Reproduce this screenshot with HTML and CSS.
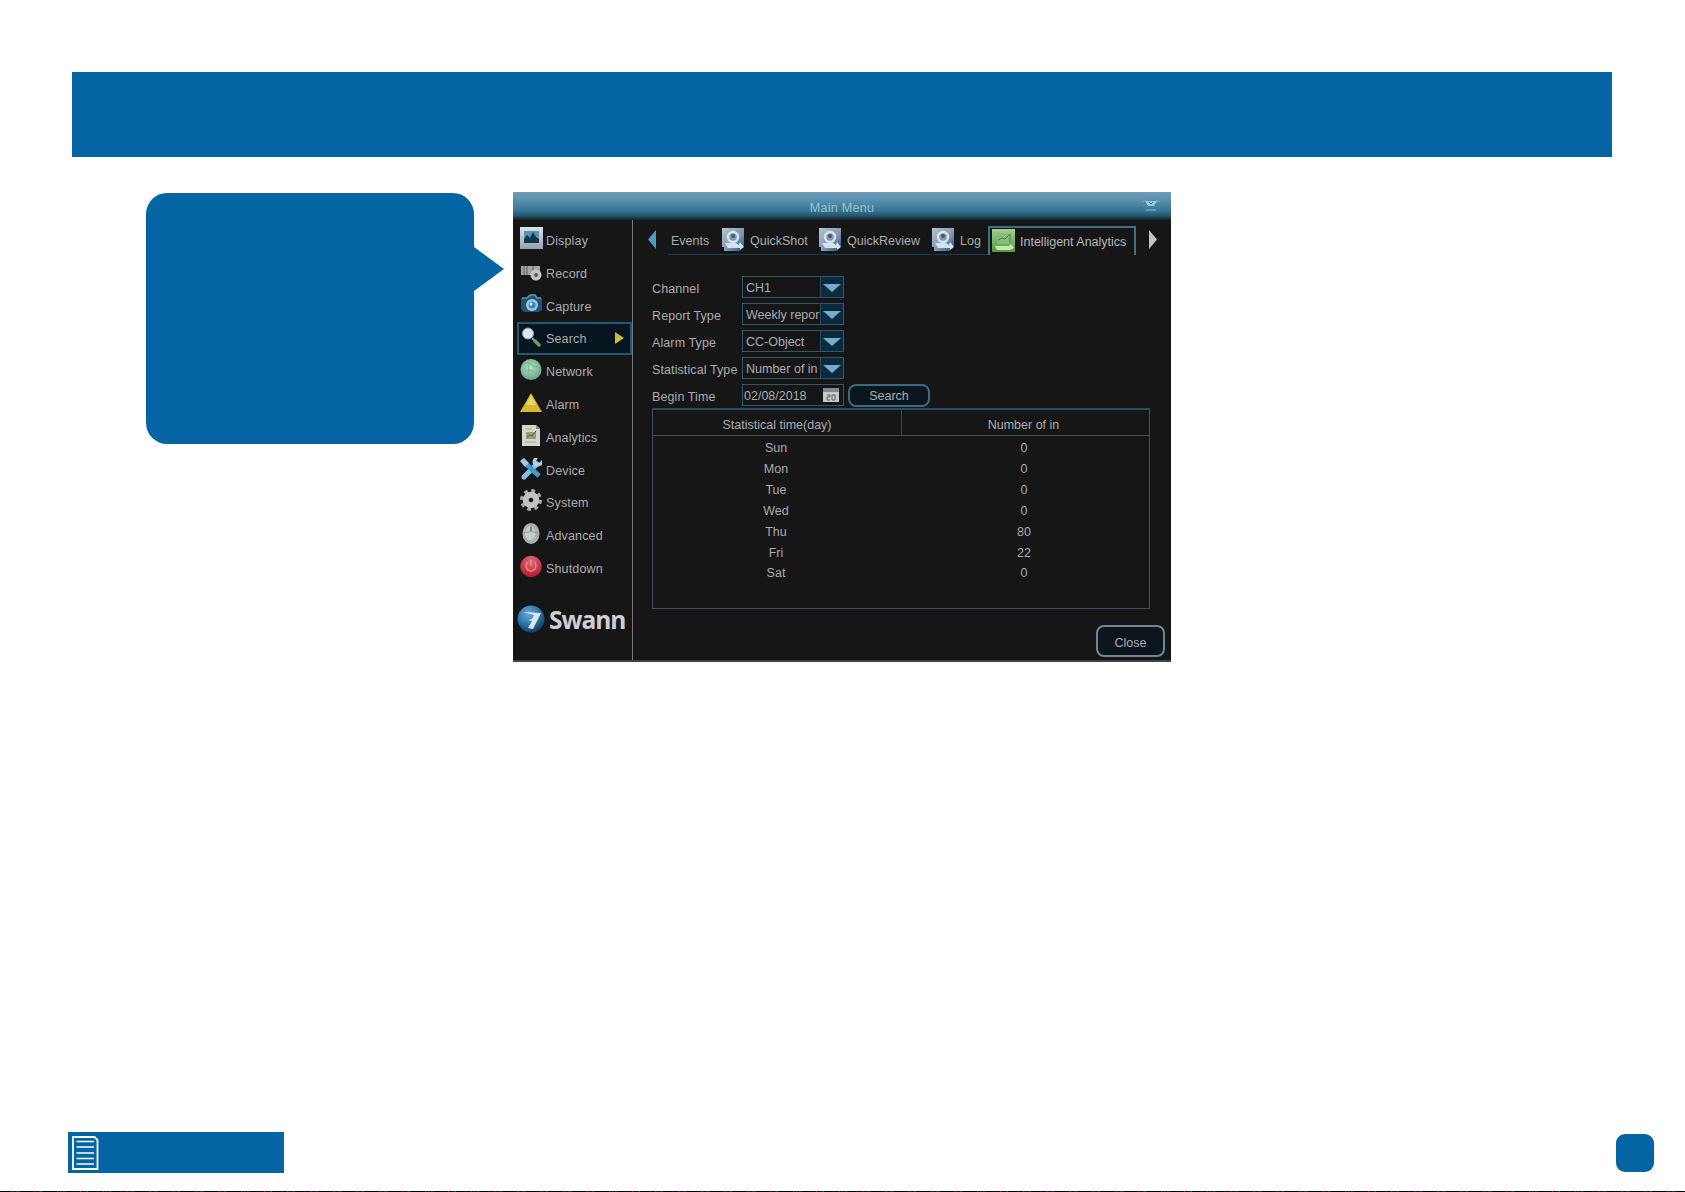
FILE: index.html
```html
<!DOCTYPE html>
<html lang="en">
<head>
  <meta charset="UTF-8">
  <title>Intelligent Analytics</title>
  <link rel="stylesheet" href="styles.css">
</head>
<body>

  <svg width="0" height="0" class="defs">
    <defs>
      <linearGradient id="silver" x1="0" y1="0" x2="0" y2="1"><stop offset="0" stop-color="#dde4e8"/><stop offset="1" stop-color="#93a1ab"/></linearGradient>
      <linearGradient id="tabBlue" x1="0" y1="0" x2="1" y2="1"><stop offset="0" stop-color="#b5c4d3"/><stop offset="0.6" stop-color="#7c95af"/><stop offset="1" stop-color="#1d4c86"/></linearGradient>
      <linearGradient id="tabGreen" x1="0" y1="0" x2="0" y2="1"><stop offset="0" stop-color="#a5cf91"/><stop offset="1" stop-color="#4f9e37"/></linearGradient>
      <radialGradient id="ball" cx="0.4" cy="0.3" r="0.7"><stop offset="0" stop-color="#69a9d1"/><stop offset="0.6" stop-color="#2a73a8"/><stop offset="1" stop-color="#123f66"/></radialGradient>
      <radialGradient id="green" cx="0.45" cy="0.4" r="0.6"><stop offset="0" stop-color="#b5e0c4"/><stop offset="1" stop-color="#66aa84"/></radialGradient>
      <radialGradient id="red" cx="0.5" cy="0.25" r="0.75"><stop offset="0" stop-color="#dc7078"/><stop offset="1" stop-color="#b61728"/></radialGradient>
      <symbol id="report" viewBox="0 0 23 24">
        <path d="M0 0h22v18h-4v5H2v-4H0z" fill="url(#tabBlue)"/>
        <circle cx="11" cy="9" r="5" fill="#8099b0" stroke="#dbe4eb" stroke-width="2.4"/>
        <circle cx="11" cy="8" r="2" fill="#3f5a75"/>
        <path d="M3 15h11l3 2 1-3 4 5-4 3v-2H6z" fill="#d3e2f0"/>
      </symbol>
    </defs>
  </svg>

  <div class="header"></div>

  <div class="content">
    <div class="callout"></div>

    <div class="window">
      <div class="titlebar">
        <span>Main Menu</span>
        <svg class="fold" width="20" height="12" viewBox="0 0 20 12"><path d="M1 3l4-2M19 3l-4-2M5 11h10" stroke="#6fa4bc" stroke-width="1.3"/><path d="M4 2h12l-3 5H7z" fill="#9cc8d9"/><path d="M8 3l2 2 2-2" stroke="#2b6d8d" fill="none"/></svg>
      </div>

      <div class="main">
        <!-- Left menu -->
        <div class="sidebar">
          <div class="item"><svg viewBox="0 0 23 23"><path fill="url(#silver)" d="M0 0h23v22H0z"/><path fill="#5a92b3" d="M4 4h15v12H4z"/><path d="M4 16V12l3-4 3 3 3-6 3 5 3 2v4z" fill="#11364f"/></svg><span>Display</span></div>
          <div class="item"><svg viewBox="0 0 23 23"><path fill="#a3a6a8" d="M1 6h19v9H1z"/><path d="M4 6v9M7 6v9M13 6v4" stroke="#595d60"/><circle cx="16" cy="15" r="5.5" fill="#c2c5c6"/><circle cx="16" cy="15" r="2" fill="#55595b"/></svg><span>Record</span></div>
          <div class="item"><svg viewBox="0 0 23 23"><path d="M1 5h6l3-3h5l2 3h5v12l-3 2H4l-3-3z" fill="#1c5376"/><path d="M2 5h5l3-3h5l2 3h4" stroke="#6296b3" stroke-width="1.5" fill="none"/><circle cx="12" cy="12" r="6" fill="#a1c8dc"/><circle cx="12" cy="12" r="3.6" fill="#3587ba"/><circle cx="11" cy="11" r="1.5" fill="#d8edf7"/></svg><span>Capture</span></div>
          <div class="item selected"><svg viewBox="0 0 23 23"><path d="M12 12l3 3" stroke="#7fa4b3" stroke-width="2"/><path d="M15 15l4 4" stroke="#71986f" stroke-width="3.5" stroke-linecap="round"/><circle cx="8" cy="7.5" r="5.5" fill="#d8e7ee" stroke="#87a9ba"/></svg><span>Search</span><i class="arrow"></i></div>
          <div class="item"><svg viewBox="0 0 23 23"><circle cx="11" cy="11.5" r="10.5" fill="url(#green)"/><path d="M4 6q4-3 8 1t7 1M5 14q5-4 9 0t4-1M11 2q-5 8 0 18" stroke="#79b592" fill="none"/></svg><span>Network</span></div>
          <div class="item"><svg viewBox="0 0 23 23"><path d="M11 2l11 19H0z" fill="#d5b92e"/><path d="M11 4l5 10H6z" fill="#e8d764"/></svg><span>Alarm</span></div>
          <div class="item"><svg viewBox="0 0 23 23"><path fill="#d3d8cb" d="M2 1h14l4 4v17H2z"/><path d="M6 8h10v7H6z" fill="#929e7b"/><path d="M7 13l3-2 2 1 4-5" stroke="#50662e" fill="none"/><path d="M5 5h7M5 18h11" stroke="#a5ac9a"/><path d="M16 1v4h4" fill="#8b9383"/></svg><span>Analytics</span></div>
          <div class="item"><svg viewBox="0 0 23 23"><path d="M4 20L17 7" stroke="#82bde0" stroke-width="5" stroke-linecap="round"/><path d="M14 1q-3 4 0 8 3 2 8-1V3l-3 3-3-2 2-3z" fill="#a8d0e7"/><path d="M4 5l15 14" stroke="#4796cc" stroke-width="5"/><path d="M0 4l4-3 5 5-4 4z" fill="#9ac9e4"/></svg><span>Device</span></div>
          <div class="item"><svg viewBox="0 0 23 23"><circle cx="11" cy="11" r="9" fill="none" stroke="#a9a9a9" stroke-width="4" stroke-dasharray="3.6 3.47"/><circle cx="11" cy="11" r="5.3" fill="none" stroke="#c1c1c1" stroke-width="6"/></svg><span>System</span></div>
          <div class="item"><svg viewBox="0 0 23 23"><ellipse cx="11" cy="11.5" rx="8.5" ry="10.5" fill="#acb0b2"/><ellipse cx="10" cy="11" rx="5" ry="7" fill="#c9cccd"/><path d="M11 1v9M4 11q7-3 14 0" stroke="#989d9f" fill="none"/><path d="M11 5v4" stroke="#747a7e" stroke-width="2"/></svg><span>Advanced</span></div>
          <div class="item"><svg viewBox="0 0 23 23"><circle cx="11" cy="11.5" r="10.7" fill="url(#red)"/><path d="M7 7q-3 8 4 9 7-1 4-9M11 5v6" stroke="#e58c92" stroke-width="1.5" fill="none"/></svg><span>Shutdown</span></div>
          <div class="logo">
            <svg viewBox="0 0 28 28"><circle cx="14" cy="14" r="13.5" fill="url(#ball)"/><path d="M6 7l18 1-8 16-5-1 4-7-4-1 4-1 2-4z" fill="#dbe8f1"/></svg>
            <span>Swann</span>
          </div>
        </div>

        <!-- Right panel -->
        <div class="panel">
          <div class="tabs">
            <svg class="prev" viewBox="0 0 9 19"><path d="M8 0v19L0 9.5z" fill="#4b9cc5"/></svg>
            <div class="tab events"><span>Events</span></div>
            <div class="tab shot"><svg><use href="#report"/></svg><span>QuickShot</span></div>
            <div class="tab review"><svg><use href="#report"/></svg><span>QuickReview</span></div>
            <div class="tab log"><svg><use href="#report"/></svg><span>Log</span></div>
            <div class="tab active"><svg viewBox="0 0 23 24"><path d="M0 0h23v23H0z" fill="url(#tabGreen)"/><path d="M5 4h13v11H5z" fill="#8cbc79"/><path d="M6 11l4-2 3 1 5-5v9" stroke="#4c7d3c" fill="none"/><path d="M3 17h14l2-2 3 4-4 2H5z" fill="#c6e8b6"/></svg><span>Intelligent Analytics</span></div>
            <svg class="next" viewBox="0 0 9 19"><path d="M0 0v19l8-9.5z" fill="#c1c5c7"/></svg>
          </div>

          <div class="form">
            <div class="row"><label>Channel</label><div class="select"><span>CH1</span><b></b></div></div>
            <div class="row"><label>Report Type</label><div class="select"><span>Weekly repor</span><b></b></div></div>
            <div class="row"><label>Alarm Type</label><div class="select"><span>CC-Object</span><b></b></div></div>
            <div class="row"><label>Statistical Type</label><div class="select"><span>Number of in</span><b></b></div></div>
            <div class="row"><label>Begin Time</label><div class="select date"><span>02/08/2018</span><svg width="16" height="16" viewBox="0 0 16 16"><path d="M0 1h16v14H0z" fill="#c4cacd"/><path d="M0 1h16v4H0z" fill="#7f898e"/><path d="M4 8h3v2H4v3h3M9 8h3v5H9z" stroke="#5b666c" fill="none"/></svg></div><button class="search">Search</button></div>
          </div>

          <div class="table">
            <div class="thead"><span>Statistical time(day)</span><span>Number of in</span></div>
            <div class="tr"><span>Sun</span><span>0</span></div>
            <div class="tr"><span>Mon</span><span>0</span></div>
            <div class="tr"><span>Tue</span><span>0</span></div>
            <div class="tr"><span>Wed</span><span>0</span></div>
            <div class="tr"><span>Thu</span><span>80</span></div>
            <div class="tr"><span>Fri</span><span>22</span></div>
            <div class="tr"><span>Sat</span><span>0</span></div>
          </div>

          <button class="close">Close</button>
        </div>
      </div>
    </div>
  </div>

  <!-- Footer -->
  <div class="footer">
    <div class="contents">
      <svg width="27" height="35" viewBox="0 0 27 35" fill="none" stroke="#fff"><path d="M1 1h21.5l3 3v29H1z" stroke-width="1.8"/><path d="M4.5 5.5h17.5M4.5 11h17.5M4.5 17h17.5M4.5 22.5h17.5M4.5 28h17.5" stroke-width="1.7"/></svg>
    </div>
    <div class="page"></div>
  </div>
  <div class="edge"></div>

</body>
</html>
```
FILE: styles.css
```css
* {
  box-sizing: border-box;
}
body {
  margin: 0;
  width: 1685px;
  height: 1192px;
  display: flex;
  flex-direction: column;
  background-color: #fff;
  font-family: "Liberation Sans", Arial, sans-serif;
  font-size: 12.5px;
  color: #a9adb0;
  overflow: hidden;
}
svg {
  display: block;
  flex: none;
}
.defs {
  position: absolute;
}
.header {
  height: 85px;
  margin: 72px 73px 0 72px;
  background-color: #0565a4;
}
.content {
  display: flex;
  align-items: flex-start;
  margin: 35px 0 0 146px;
}
.callout {
  position: relative;
  width: 328px;
  height: 251px;
  margin-top: 1px;
  border-radius: 21px;
  background-color: #0565a4;
}
.callout::after {
  content: "";
  position: absolute;
  left: 328px;
  top: 54px;
  border: 22.5px solid transparent;
  border-left: 30px solid #0565a4;
  border-right: 0;
}

/* window */
.window {
  width: 658px;
  height: 470px;
  margin-left: 39px;
  display: flex;
  flex-direction: column;
  background-color: #161616;
  border-bottom: 2px solid #3d4347;
}
.titlebar {
  position: relative;
  height: 28px;
  display: flex;
  justify-content: center;
  align-items: center;
  padding-top: 3px;
  background: linear-gradient(#719cb7, #5790ae 30%, #397692 65%, #24556d 85%, #151f26);
  color: #9bc0d0;
  letter-spacing: 0.3px;
}
.fold {
  position: absolute;
  right: 10px;
  top: 7px;
}
.main {
  display: flex;
  flex: 1;
}

/* sidebar */
.sidebar {
  width: 120px;
  padding-top: 4px;
  border-right: 1px solid #777b7d;
}
.item {
  display: flex;
  align-items: center;
  height: 32.75px;
  padding-left: 7px;
  letter-spacing: 0.15px;
}
.item span {
  padding-top: 2px;
}
.item svg {
  width: 23px;
  height: 23px;
  margin: -3px 3px 0 0;
}
.item.selected {
  margin-left: 4px;
  padding-left: 1px;
  border: 2px solid #225877;
  background-color: #07151f;
}
.item.selected span {
  padding-top: 1px;
}
.arrow {
  margin: -2px 6px 0 auto;
  border: 6px solid transparent;
  border-left: 9px solid #d3b73a;
  border-right: 0;
}
.logo {
  display: flex;
  align-items: center;
  height: 36px;
  margin-top: 17px;
  padding-left: 4px;
  font-family: "Open Sans", sans-serif;
  font-size: 24.5px;
  font-weight: 700;
  letter-spacing: -1px;
  color: #cdcfd0;
}
.logo svg {
  width: 28px;
  height: 28px;
  margin-right: 4px;
}

/* tabs */
.panel {
  flex: 1;
  display: flex;
  flex-direction: column;
  padding: 6px 0 0 15px;
}
.tabs {
  display: flex;
  height: 29px;
}
.prev, .next {
  width: 9px;
  height: 19px;
  margin-top: 4px;
}
.next {
  margin-left: 13px;
}
.tab {
  display: flex;
  align-items: center;
  border-bottom: 1px solid #153c55;
  white-space: nowrap;
}
.tab span {
  padding-top: 2px;
}
.tab svg {
  width: 23px;
  height: 24px;
  margin-right: 5px;
}
.events {
  width: 54px;
  margin-left: 11px;
  padding-left: 3px;
}
.shot {
  width: 97px;
}
.review {
  width: 113px;
}
.log {
  width: 56px;
}
.tab.active {
  width: 148px;
  padding: 0 0 2px 2px;
  border: 2px solid #3f7088;
  border-bottom: 0;
  color: #b5b9bb;
}

/* form */
.form {
  margin: 21px 0 0 4px;
}
.row {
  display: flex;
  align-items: center;
  height: 22px;
  margin-bottom: 5px;
}
.row label {
  width: 90px;
  padding-top: 3px;
  letter-spacing: 0.1px;
  white-space: nowrap;
}
.select {
  display: flex;
  width: 102px;
  height: 22px;
  border: 1px solid #31566a;
  line-height: 23px;
}
.select span {
  width: 77px;
  padding-left: 3px;
  white-space: nowrap;
}
.select b {
  width: 23px;
  background-color: #0a2a3e;
  border-left: 1px solid #28485a;
}
.select b::before {
  content: "";
  display: block;
  margin: 7px 0 0 2px;
  width: 0;
  border: 9px solid transparent;
  border-top: 8px solid #73adc9;
  border-bottom: 0;
}
.select.date span {
  width: 80px;
  padding-left: 1px;
}
.select.date svg {
  margin-top: 2px;
}
button {
  padding: 2px 0 0;
  background-color: #0c161c;
  border: 2px solid #396b86;
  font: inherit;
  color: inherit;
}
.search {
  width: 82px;
  height: 23px;
  margin-left: 4px;
  border-radius: 8px;
}

/* table */
.table {
  width: 498px;
  height: 201px;
  margin: -3px 0 0 4px;
  border: 1px solid #3a5260;
  border-top: 2px solid #254c60;
}
.thead, .tr {
  display: grid;
  grid-template-columns: 248px 1fr;
  align-items: center;
  height: 20.85px;
  text-align: center;
}
.tr span {
  position: relative;
  left: -1px;
}
.thead {
  height: 26px;
  margin-bottom: 2px;
  border-bottom: 1px solid #485054;
}
.thead span {
  line-height: 24px;
  padding-top: 3px;
  height: 25px;
}
.thead span + span {
  padding-right: 4px;
  border-left: 1px solid #384950;
}
.close {
  width: 69px;
  height: 32px;
  margin: 16px 6px 0 auto;
  padding-top: 3px;
  border-color: #6c8795;
  border-radius: 8px;
}

/* footer */
.footer {
  display: flex;
  justify-content: space-between;
  margin: auto 31px 18px 68px;
}
.contents {
  width: 216px;
  height: 41px;
  padding: 4px;
  background-color: #0565a4;
}
.page {
  width: 38px;
  height: 38px;
  margin-top: 2px;
  border-radius: 9px;
  background-color: #0565a4;
}
.edge {
  flex: none;
  height: 1px;
  background: repeating-linear-gradient(90deg, #000 0 5px, #3b0b4a 5px 6px, #000 6px 11px, #a3157c 11px 12px, #111 12px 17px, #1d4a1c 17px 19px, #000 19px 23px);
}
```
